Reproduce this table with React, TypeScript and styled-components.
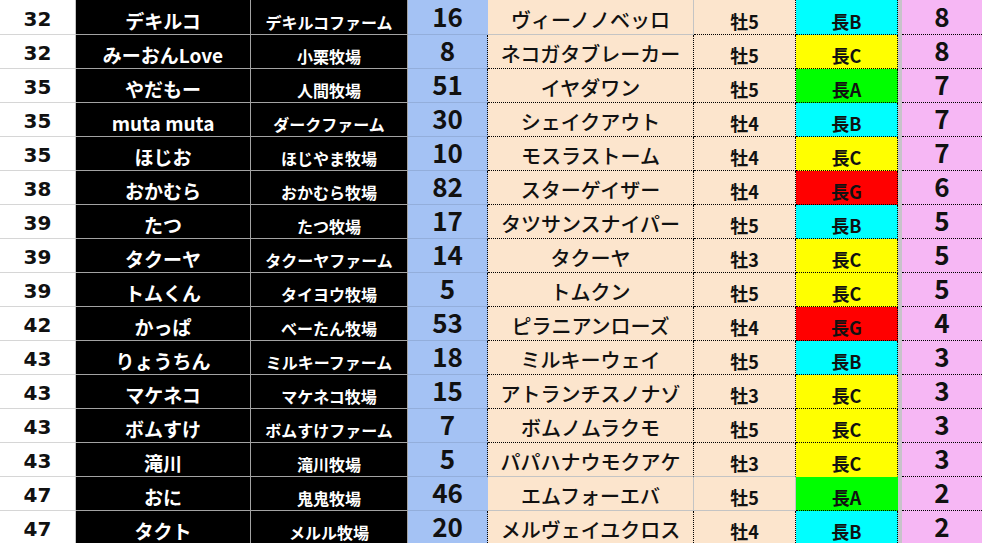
import React from "react";
import styled, { createGlobalStyle } from "styled-components";

const GlobalStyle = createGlobalStyle`
  html, body { margin: 0; padding: 0; background: #ffffff; }
  body { font-family: "Noto Sans CJK JP", "Noto Sans", sans-serif; }
`;

type Grade = "A" | "B" | "C" | "G";
type Frame = "top" | "pre" | "solid" | undefined;

interface Entry {
  rank: number;
  owner: string;
  farm: string;
  pts: number;
  horse: string;
  sex: string;
  grade: Grade;
  score: number;
  frame?: Frame;
}

const gradeColor: Record<Grade, string> = {
  A: "#00ff00",
  B: "#00ffff",
  C: "#ffff00",
  G: "#ff0000",
};

const entries: Entry[] = [
  { rank: 32, owner: "デキルコ", farm: "デキルコファーム", pts: 16, horse: "ヴィーノノベッロ", sex: "牡5", grade: "B", score: 8, frame: "top" },
  { rank: 32, owner: "みーおんLove", farm: "小栗牧場", pts: 8, horse: "ネコガタブレーカー", sex: "牡5", grade: "C", score: 8 },
  { rank: 35, owner: "やだもー", farm: "人間牧場", pts: 51, horse: "イヤダワン", sex: "牡5", grade: "A", score: 7 },
  { rank: 35, owner: "muta muta", farm: "ダークファーム", pts: 30, horse: "シェイクアウト", sex: "牡4", grade: "B", score: 7 },
  { rank: 35, owner: "ほじお", farm: "ほじやま牧場", pts: 10, horse: "モスラストーム", sex: "牡4", grade: "C", score: 7 },
  { rank: 38, owner: "おかむら", farm: "おかむら牧場", pts: 82, horse: "スターゲイザー", sex: "牡4", grade: "G", score: 6 },
  { rank: 39, owner: "たつ", farm: "たつ牧場", pts: 17, horse: "タツサンスナイパー", sex: "牡5", grade: "B", score: 5 },
  { rank: 39, owner: "タクーヤ", farm: "タクーヤファーム", pts: 14, horse: "タクーヤ", sex: "牡3", grade: "C", score: 5 },
  { rank: 39, owner: "トムくん", farm: "タイヨウ牧場", pts: 5, horse: "トムクン", sex: "牡5", grade: "C", score: 5 },
  { rank: 42, owner: "かっぱ", farm: "べーたん牧場", pts: 53, horse: "ピラニアンローズ", sex: "牡4", grade: "G", score: 4 },
  { rank: 43, owner: "りょうちん", farm: "ミルキーファーム", pts: 18, horse: "ミルキーウェイ", sex: "牡5", grade: "B", score: 3 },
  { rank: 43, owner: "マケネコ", farm: "マケネコ牧場", pts: 15, horse: "アトランチスノナゾ", sex: "牡3", grade: "C", score: 3 },
  { rank: 43, owner: "ボムすけ", farm: "ボムすけファーム", pts: 7, horse: "ボムノムラクモ", sex: "牡5", grade: "C", score: 3 },
  { rank: 43, owner: "滝川", farm: "滝川牧場", pts: 5, horse: "パパハナウモクアケ", sex: "牡3", grade: "C", score: 3, frame: "pre" },
  { rank: 47, owner: "おに", farm: "鬼鬼牧場", pts: 46, horse: "エムフォーエバ", sex: "牡5", grade: "A", score: 2, frame: "solid" },
  { rank: 47, owner: "タクト", farm: "メルル牧場", pts: 20, horse: "メルヴェイユクロス", sex: "牡4", grade: "B", score: 2 },
];

const DOT = "1px dotted #000000";
const GRAY = "1px solid #c4c4c4";
const NONE = "1px solid transparent";

const Sheet = styled.div`
  width: 982px;
  height: 543px;
  overflow: hidden;
  display: flex;
  flex-direction: column;
`;

const Row = styled.div`
  display: grid;
  grid-template-columns: 76px 175px 157px 80px 206px 102px 102px 4px 80px;
  height: 34px;
  flex: 0 0 auto;
  &:first-child {
    height: 35px;
  }
`;

const Cell = styled.div<{ $right?: string; $bottom?: string }>`
  box-sizing: border-box;
  display: flex;
  align-items: flex-end;
  justify-content: center;
  white-space: nowrap;
  line-height: 1;
  padding-bottom: 4px;
  border-right: ${(p) => p.$right ?? "0 none"};
  border-bottom: ${(p) => p.$bottom ?? "0 none"};
`;

const RankCell = styled(Cell)`
  background: #ffffff;
  color: #111111;
  font-family: "DejaVu Sans", "Noto Sans CJK JP", sans-serif;
  font-size: 20px;
  font-weight: 700;
  padding-bottom: 5px;
  border-right: 1px solid #c6c6c6;
  border-bottom: 1px solid #d6d6d6;
`;

const OwnerCell = styled(Cell)`
  background: #000000;
  color: #ffffff;
  font-size: 19px;
  font-weight: 700;
  border-right: 1px solid #a3a3a3;
  border-bottom: 1px solid #a3a3a3;
`;

const FarmCell = styled(Cell)`
  background: #000000;
  color: #ffffff;
  font-size: 16px;
  font-weight: 700;
  border-right: 1px solid #a3a3a3;
  border-bottom: 1px solid #a3a3a3;
`;

const PointCell = styled(Cell)`
  background: #a4c2f4;
  color: #111111;
  font-size: 26px;
  font-weight: 700;
  padding-bottom: 5px;
  border-bottom: 1px solid #93aedb;
`;

const HorseCell = styled(Cell)`
  background: #fce5cd;
  color: #111111;
  font-size: 20px;
  font-weight: 500;
  padding-bottom: 4px;
`;

const SexCell = styled(Cell)`
  background: #fce5cd;
  color: #111111;
  font-size: 18px;
  font-weight: 700;
`;

const GradeCell = styled(Cell)<{ $grade: Grade }>`
  background: ${(p) => gradeColor[p.$grade]};
  color: #111111;
  font-size: 18px;
  font-weight: 700;
`;

const Gap = styled.div`
  background: #c7c3c9;
`;

const ScoreCell = styled(Cell)`
  background: #f6b7f4;
  color: #111111;
  font-size: 26px;
  font-weight: 700;
  padding-bottom: 5px;
  border-bottom: ${DOT};
`;

function SheetRow({ e }: { e: Entry }) {
  const f = e.frame;
  const plain = f === "top" || f === "solid";
  const closeBelow = f === "pre" || f === "solid";
  return (
    <Row>
      <RankCell>{e.rank}</RankCell>
      <OwnerCell>{e.owner}</OwnerCell>
      <FarmCell>{e.farm}</FarmCell>
      <PointCell $right={plain ? NONE : DOT}>{e.pts}</PointCell>
      <HorseCell
        $right={plain ? GRAY : DOT}
        $bottom={f === "top" || closeBelow ? GRAY : DOT}
      >
        {e.horse}
      </HorseCell>
      <SexCell $right={f === "solid" ? GRAY : DOT} $bottom={closeBelow ? GRAY : DOT}>
        {e.sex}
      </SexCell>
      <GradeCell $grade={e.grade} $right={f === "solid" ? NONE : DOT} $bottom={f === "pre" ? NONE : DOT}>
        長{e.grade}
      </GradeCell>
      <Gap />
      <ScoreCell>{e.score}</ScoreCell>
    </Row>
  );
}

export default function App() {
  return (
    <>
      <GlobalStyle />
      <Sheet>
        {entries.map((e, i) => (
          <SheetRow key={i} e={e} />
        ))}
      </Sheet>
    </>
  );
}
